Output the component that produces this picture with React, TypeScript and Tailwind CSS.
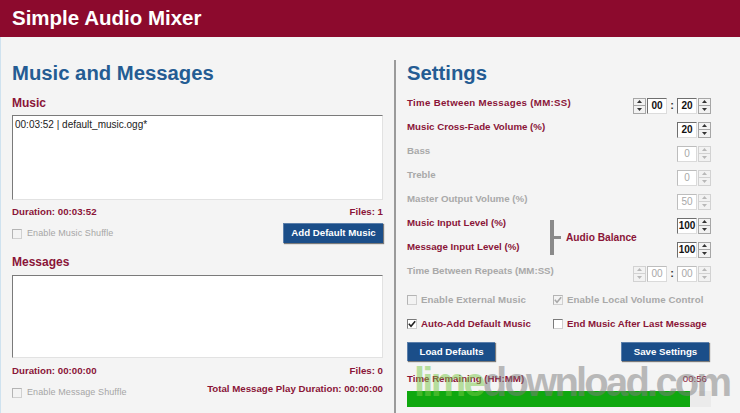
import React from "react";

const CRIMSON = "text-[#8a1538]";

function Arrows({ disabled }: { disabled?: boolean }) {
  const fill = disabled ? "#b8b8b8" : "#333333";
  const b = disabled ? "border-[#d2d2d2]" : "border-[#a6a6a6]";
  return (
    <div className="flex flex-col w-[13px] h-[16px]">
      <div className={`flex-1 flex items-center justify-center border ${b} bg-[#f2f2f2]`}>
        <svg width="5" height="3" viewBox="0 0 5 3">
          <path d="M0 3 L2.5 0 L5 3 Z" fill={fill} />
        </svg>
      </div>
      <div className={`flex-1 flex items-center justify-center border border-t-0 ${b} bg-[#f2f2f2]`}>
        <svg width="5" height="3" viewBox="0 0 5 3">
          <path d="M0 0 L2.5 3 L5 0 Z" fill={fill} />
        </svg>
      </div>
    </div>
  );
}

function Box({ value, disabled }: { value: string; disabled?: boolean }) {
  return (
    <div
      className={`h-[16px] w-[20px] flex items-center justify-center text-[10px] leading-none bg-white border ${
        disabled
          ? "border-[#dadada] border-t-[#bdbdbd] border-l-[#bdbdbd] text-[#a8a8a8] font-normal"
          : "border-[#dcdcdc] border-t-[#6e6e6e] border-l-[#6e6e6e] text-[#111111] font-bold"
      }`}
    >
      {value}
    </div>
  );
}

function Spin({ value, disabled }: { value: string; disabled?: boolean }) {
  return (
    <div className="flex items-center gap-[1px]">
      <Box value={value} disabled={disabled} />
      <Arrows disabled={disabled} />
    </div>
  );
}

function TimeSpin({ mm, ss, disabled }: { mm: string; ss: string; disabled?: boolean }) {
  return (
    <div className="flex items-center">
      <Arrows disabled={disabled} />
      <div className="ml-[1px]">
        <Box value={mm} disabled={disabled} />
      </div>
      <span className="w-[10px] text-center text-[11px] font-bold text-[#333333]">:</span>
      <Box value={ss} disabled={disabled} />
      <div className="ml-[1px]">
        <Arrows disabled={disabled} />
      </div>
    </div>
  );
}

function Row({
  label,
  disabled,
  wide,
  children,
}: {
  label: string;
  disabled?: boolean;
  wide?: boolean;
  children: React.ReactNode;
}) {
  return (
    <div className="h-[24px] flex items-center justify-between">
      <span
        className={`pb-[5px] text-[9.7px] font-bold leading-[12px] ${wide ? "tracking-[0.3px]" : ""} ${
          disabled ? "text-[#a9a9a9]" : CRIMSON
        }`}
      >
        {label}
      </span>
      {children}
    </div>
  );
}

function Check({ checked, disabled }: { checked?: boolean; disabled?: boolean }) {
  return (
    <span
      className={`w-[10px] h-[10px] shrink-0 border flex items-center justify-center ${
        disabled
          ? "border-[#d0d0d0] border-t-[#b4b4b4] border-l-[#b4b4b4] bg-[#f3f3f3]"
          : "border-[#cfcfcf] border-t-[#7a7a7a] border-l-[#7a7a7a] bg-white"
      }`}
    >
      {checked && (
        <svg width="8" height="8" viewBox="0 0 8 8">
          <path
            d="M0.8 3.8 L3 6.2 L7.2 1.2"
            stroke={disabled ? "#a8a8a8" : "#222222"}
            strokeWidth="1.6"
            fill="none"
          />
        </svg>
      )}
    </span>
  );
}

function Button({ label, w }: { label: string; w: string }) {
  return (
    <div
      className={`${w} h-full flex items-center justify-center bg-[#1b4e89] text-white text-[9.7px] font-bold border-t border-l border-[#5b7fab] shadow-[1px_1px_1px_#7a7a7a]`}
    >
      {label}
    </div>
  );
}

export default function App() {
  return (
    <div className="w-[740px] h-[413px] overflow-hidden relative bg-[#f4f4f4] font-['Liberation_Sans',Arial,sans-serif]">
      <div className="h-[37px] bg-[#8c0a2d] flex items-center pl-[12px]">
        <h1 className="text-white font-bold text-[20.5px] leading-none">Simple Audio Mixer</h1>
      </div>

      <div className="flex h-[376px] border-l border-[#cfe2ef]">
        {/* Left panel */}
        <div className="w-[371px] ml-[11px] flex flex-col">
          <h2 className="mt-[23px] text-[20.3px] leading-[26px] font-bold text-[#245c93]">
            Music and Messages
          </h2>
          <div className={`mt-[10px] text-[12px] leading-[14px] font-bold ${CRIMSON}`}>Music</div>
          <div className="mt-[5px] h-[85px] bg-white border border-[#e2e2e2] border-t-[#7a7a7a] border-l-[#7a7a7a] px-[2px] pt-[3px] text-[10px] leading-[12px] text-[#222222]">
            00:03:52 | default_music.ogg*
          </div>
          <div className={`mt-[5.5px] flex justify-between text-[9.7px] leading-[12px] font-bold ${CRIMSON}`}>
            <span>Duration: 00:03:52</span>
            <span>Files: 1</span>
          </div>
          <div className="mt-[5.5px] h-[20px] flex items-center justify-between">
            <div className="flex items-center gap-[5px] pt-[1px]">
              <Check disabled />
              <span className="text-[9px] text-[#a6a6a6] tracking-[0.1px]">Enable Music Shuffle</span>
            </div>
            <Button label="Add Default Music" w="w-[100px]" />
          </div>
          <div className={`mt-[12px] text-[12px] leading-[14px] font-bold ${CRIMSON}`}>Messages</div>
          <div className="mt-[5.5px] h-[83px] bg-white border border-[#e2e2e2] border-t-[#7a7a7a] border-l-[#7a7a7a]" />
          <div className={`mt-[7.5px] flex justify-between text-[9.7px] leading-[12px] font-bold ${CRIMSON}`}>
            <span>Duration: 00:00:00</span>
            <span>Files: 0</span>
          </div>
          <div className="mt-[3.5px] h-[23px] flex justify-between">
            <div className="flex items-center gap-[5px] self-center pt-[2px]">
              <Check disabled />
              <span className="text-[9px] text-[#a6a6a6] tracking-[0.1px]">Enable Message Shuffle</span>
            </div>
            <span className={`mt-[2px] text-[9.7px] leading-[12px] font-bold ${CRIMSON}`}>
              Total Message Play Duration: 00:00:00
            </span>
          </div>
        </div>

        {/* Divider */}
        <div className="ml-[11px] mt-[23px] w-[2px] bg-[#9a9a9a]" />

        {/* Right panel */}
        <div className="ml-[11px] w-[304px] flex flex-col">
          <h2 className="mt-[23px] text-[20.3px] leading-[26px] font-bold text-[#245c93]">Settings</h2>
          <div className="mt-[7.5px] flex flex-col">
            <Row label="Time Between Messages (MM:SS)" wide>
              <TimeSpin mm="00" ss="20" />
            </Row>
            <Row label="Music Cross-Fade Volume (%)">
              <Spin value="20" />
            </Row>
            <Row label="Bass" disabled>
              <Spin value="0" disabled />
            </Row>
            <Row label="Treble" disabled>
              <Spin value="0" disabled />
            </Row>
            <Row label="Master Output Volume (%)" disabled>
              <Spin value="50" disabled />
            </Row>
            <div className="h-[48px] flex items-center">
              <div className="w-[143px] flex flex-col">
                <div className="h-[24px] flex items-center">
                  <span className={`pb-[5px] text-[9.7px] font-bold leading-[12px] ${CRIMSON}`}>
                    Music Input Level (%)
                  </span>
                </div>
                <div className="h-[24px] flex items-center">
                  <span className={`pb-[5px] text-[9.7px] font-bold leading-[12px] ${CRIMSON}`}>
                    Message Input Level (%)
                  </span>
                </div>
              </div>
              <div className="w-[4px] h-[35px] bg-[#8a8a8a]" />
              <div className="w-[7px] h-[3px] bg-[#8a8a8a]" />
              <span className={`ml-[5px] text-[10.2px] font-bold leading-[12px] ${CRIMSON}`}>Audio Balance</span>
              <div className="flex-1" />
              <div className="flex flex-col">
                <div className="h-[24px] flex items-center">
                  <Spin value="100" />
                </div>
                <div className="h-[24px] flex items-center">
                  <Spin value="100" />
                </div>
              </div>
            </div>
            <Row label="Time Between Repeats (MM:SS)" disabled>
              <TimeSpin mm="00" ss="00" disabled />
            </Row>
          </div>

          <div className="mt-[2.5px] grid grid-cols-[146px_1fr]">
            <div className="h-[24px] flex items-center gap-[4px]">
              <Check disabled />
              <span className="text-[9.7px] font-bold text-[#a9a9a9] tracking-[0.1px]">Enable External Music</span>
            </div>
            <div className="h-[24px] flex items-center gap-[4px]">
              <Check disabled checked />
              <span className="text-[9.7px] font-bold text-[#a9a9a9] tracking-[0.1px]">Enable Local Volume Control</span>
            </div>
            <div className="h-[24.5px] flex items-center gap-[4px]">
              <Check checked />
              <span className={`text-[9.7px] font-bold ${CRIMSON}`}>Auto-Add Default Music</span>
            </div>
            <div className="h-[24.5px] flex items-center gap-[4px]">
              <Check />
              <span className={`text-[9.7px] font-bold ${CRIMSON}`}>End Music After Last Message</span>
            </div>
          </div>

          <div className="mt-[5.5px] h-[19px] flex justify-between pr-[2px]">
            <Button label="Load Defaults" w="w-[88px]" />
            <Button label="Save Settings" w="w-[88px]" />
          </div>

          <div className={`mt-[11.5px] flex justify-between text-[9.7px] leading-[12px] font-bold ${CRIMSON}`}>
            <span>Time Remaining (HH:MM)</span>
            <span className="pr-[4px] font-normal">00:56</span>
          </div>
          <div className="mt-[6.5px] h-[16px] bg-[#ebebeb]">
            <div className="h-full w-[283px] bg-[#0fa80f]" />
          </div>
        </div>
      </div>

      {/* Watermark */}
      <div className="absolute left-[414px] top-[362px] pointer-events-none whitespace-nowrap text-[40px] leading-none font-bold tracking-[-2.8px]">
        <span className="text-[rgba(120,200,70,0.5)]">lime</span>
        <span className="text-[rgba(125,125,125,0.5)]">download.com</span>
      </div>
    </div>
  );
}
